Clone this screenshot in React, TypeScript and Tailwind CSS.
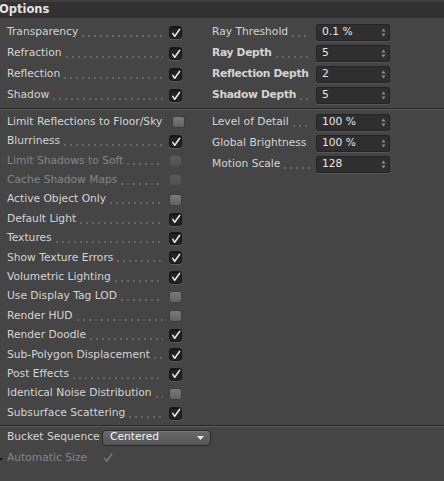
import React from 'react';

/** Render settings "Options" panel — dark C4D-style attribute manager. */

type Check = { label: string; checked: boolean; disabled?: boolean };

const top: Check[] = [
  { label: 'Transparency', checked: true },
  { label: 'Refraction', checked: true },
  { label: 'Reflection', checked: true },
  { label: 'Shadow', checked: true },
];

const topFields = [
  { label: 'Ray Threshold', value: '0.1 %', bold: false },
  { label: 'Ray Depth', value: '5', bold: true },
  { label: 'Reflection Depth', value: '2', bold: true },
  { label: 'Shadow Depth', value: '5', bold: true },
];

const rest: Check[] = [
  { label: 'Limit Reflections to Floor/Sky', checked: false },
  { label: 'Blurriness', checked: true },
  { label: 'Limit Shadows to Soft', checked: false, disabled: true },
  { label: 'Cache Shadow Maps', checked: false, disabled: true },
  { label: 'Active Object Only', checked: false },
  { label: 'Default Light', checked: true },
  { label: 'Textures', checked: true },
  { label: 'Show Texture Errors', checked: true },
  { label: 'Volumetric Lighting', checked: true },
  { label: 'Use Display Tag LOD', checked: false },
  { label: 'Render HUD', checked: false },
  { label: 'Render Doodle', checked: true },
  { label: 'Sub-Polygon Displacement', checked: true },
  { label: 'Post Effects', checked: true },
  { label: 'Identical Noise Distribution', checked: false },
  { label: 'Subsurface Scattering', checked: true },
];

const restFields = [
  { label: 'Level of Detail', value: '100 %' },
  { label: 'Global Brightness', value: '100 %' },
  { label: 'Motion Scale', value: '128' },
];

function Tick({ color = '#ececec' }: { color?: string }) {
  return (
    <svg width="10" height="10" viewBox="0 0 10 10" fill="none">
      <path d="M1.8 5.4 L3.7 8.3 L8.7 1.3" stroke={color} strokeWidth="1.5" strokeLinecap="round" strokeLinejoin="round" />
    </svg>
  );
}

function Box({ checked, disabled }: { checked: boolean; disabled?: boolean }) {
  if (checked) {
    return (
      <span className="flex h-[13px] w-[13px] shrink-0 items-center justify-center rounded-[3px] border border-[#181818] bg-[#232323] shadow-[0_1px_0_#5a5a5a,inset_0_1px_1px_#111]">
        <Tick />
      </span>
    );
  }
  return (
    <span
      className={`h-[12px] w-[13px] shrink-0 rounded-[3px] border ${
        disabled
          ? 'border-[#474747] bg-[linear-gradient(#5a5a5a,#505050)]'
          : 'border-[#3e3e3e] bg-[linear-gradient(#7a7a7a,#626262)]'
      }`}
    />
  );
}

function Dots() {
  return (
    <span className="ml-[4px] mr-[6px] h-px min-w-0 flex-1 translate-y-[3.5px] bg-[linear-gradient(to_right,#8a8a8a_2px,transparent_2px)] bg-[length:6px_1px] bg-repeat-x" />
  );
}

function Spin() {
  return (
    <svg width="5" height="9" viewBox="0 0 5 9" className="shrink-0">
      <path d="M2.5 0.5 L4.5 3.5 L0.5 3.5 Z" fill="#8f8f8f" />
      <path d="M2.5 8.5 L4.5 5.5 L0.5 5.5 Z" fill="#8f8f8f" />
    </svg>
  );
}

function CheckRow({ item, h }: { item: Check; h: string }) {
  return (
    <div className={`flex items-center pr-[6px] ${h}`}>
      <span className={`whitespace-nowrap ${item.disabled ? 'text-[#858585]' : 'text-[#d4d4d4]'}`}>{item.label}</span>
      <Dots />
      <Box checked={item.checked} disabled={item.disabled} />
    </div>
  );
}

function FieldRow({ label, value, bold }: { label: string; value: string; bold?: boolean }) {
  return (
    <div className="flex h-[21px] items-center">
      <div className="flex w-[104px] shrink-0 items-center self-stretch">
        <span className={`whitespace-nowrap text-[#d4d4d4] ${bold ? 'font-bold tracking-[-0.3px]' : ''}`}>{label}</span>
        <Dots />
      </div>
      <div className="flex h-[17px] w-[74px] items-center justify-between rounded-[2px] border border-[#242424] bg-[#2f2f2f] pl-[5px] pr-[3px] text-[#e6e6e6] shadow-[0_1px_0_#565656]">
        <span>{value}</span>
        <Spin />
      </div>
    </div>
  );
}

function Separator() {
  return (
    <div>
      <div className="h-px bg-[#262626]" />
      <div className="h-px bg-[#5c5c5c]" />
    </div>
  );
}

export default function App() {
  return (
    <div className="h-[481px] w-[444px] overflow-hidden bg-[#454545] font-['DejaVu_Sans',sans-serif] text-[10.7px] leading-none">
      <div className="flex h-[18px] items-center border-t-2 border-[#3e3e3e] bg-[#323232]">
        <span className="-ml-[1px] text-[11.5px] font-bold text-[#e2e2e2]">Options</span>
      </div>

      <section className="flex pt-[4px] pb-[2px]">
        <div className="w-[188px] shrink-0 pl-[7px]">
          {top.map((item) => (
            <CheckRow key={item.label} item={item} h="h-[21px]" />
          ))}
        </div>
        <div className="ml-[24px]">
          {topFields.map((f) => (
            <FieldRow key={f.label} {...f} />
          ))}
        </div>
      </section>

      <Separator />

      <section className="flex pt-[2.5px]">
        <div className="w-[188px] shrink-0 pl-[7px]">
          {rest.map((item) => (
            <CheckRow key={item.label} item={item} h="h-[19.4px]" />
          ))}
        </div>
        <div className="ml-[24px] -mt-[0.5px]">
          {restFields.map((f) => (
            <FieldRow key={f.label} {...f} />
          ))}
        </div>
      </section>

      <div className="mt-[2px]">
        <Separator />
      </div>

      <div className="flex h-[22px] items-center pl-[7px]">
        <span className="w-[95px] whitespace-nowrap text-[#d4d4d4]">Bucket Sequence</span>
        <div className="flex h-[16px] w-[109px] items-center justify-between rounded-[4px] border border-[#2a2a2a] bg-[linear-gradient(#6a6a6a,#555)] pl-[7px] pr-[6px] text-[#f0f0f0] shadow-[inset_0_1px_0_#777]">
          <span>Centered</span>
          <svg width="7" height="4" viewBox="0 0 7 4">
            <path d="M0 0 H7 L3.5 4 Z" fill="#e6e6e6" />
          </svg>
        </div>
      </div>
      <div className="relative flex h-[19px] items-center pl-[7px]">
        <span className="absolute left-0 top-[9px] h-[2px] w-[2px] bg-[#111]" />
        <span className="w-[94px] whitespace-nowrap text-[#858585]">Automatic Size</span>
        <span className="flex h-[12px] w-[13px] items-center justify-center">
          <Tick color="#7a7a7a" />
        </span>
      </div>
    </div>
  );
}
